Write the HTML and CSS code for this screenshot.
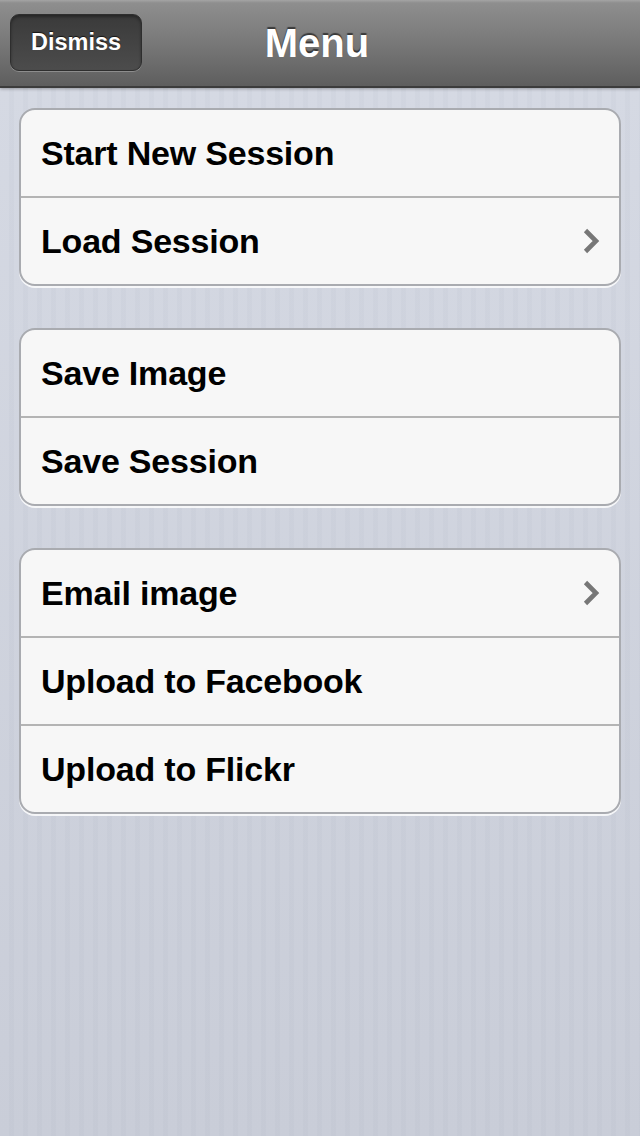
FILE: index.html
```html
<!DOCTYPE html>
<html>
<head>
<meta charset="utf-8">
<link rel="stylesheet" href="styles.css">
</head>
<body>
<div class="screen">
  <header class="navbar">
    <button class="dismiss">Dismiss</button>
    <h1 class="title">Menu</h1>
  </header>
  <main class="content">
    <ul class="group">
      <li class="cell">Start New Session</li>
      <li class="cell">Load Session<svg class="chev" viewBox="0 0 17 26"><path d="M2.5 2.5 L13 13 L2.5 23.5" fill="none" stroke="#777" stroke-width="4.6"/></svg></li>
    </ul>
    <ul class="group">
      <li class="cell">Save Image</li>
      <li class="cell">Save Session</li>
    </ul>
    <ul class="group">
      <li class="cell">Email image<svg class="chev" viewBox="0 0 17 26"><path d="M2.5 2.5 L13 13 L2.5 23.5" fill="none" stroke="#777" stroke-width="4.6"/></svg></li>
      <li class="cell">Upload to Facebook</li>
      <li class="cell">Upload to Flickr</li>
    </ul>
  </main>
</div>
</body>
</html>
```
FILE: styles.css
```css
html, body {
  margin: 0;
  padding: 0;
}
body {
  font-family: "Liberation Sans", Arial, Helvetica, sans-serif;
  width: 640px;
  height: 1136px;
  overflow: hidden;
}
.screen {
  width: 640px;
  height: 1136px;
  display: flex;
  flex-direction: column;
  background:
    repeating-linear-gradient(90deg, rgba(255,255,255,0.0) 0 9px, rgba(120,130,150,0.045) 9px 14px),
    linear-gradient(#d6dae4, #c9cdd8);
}
.navbar {
  height: 86px;
  flex: none;
  display: flex;
  align-items: center;
  justify-content: center;
  position: relative;
  background: linear-gradient(#a4a4a4 0, #8e8e8e 3px, #7a7a7a 40px, #5e5e5e 86px);
  border-bottom: 2px solid #3c3c3c;
  box-shadow: 0 1px 3px rgba(0,0,0,0.3);
}
.dismiss {
  position: absolute;
  left: 10px;
  top: 14px;
  width: 132px;
  height: 57px;
  box-sizing: border-box;
  border-radius: 9px;
  border: 1px solid #2e2e2e;
  background: linear-gradient(#3a3a3a, #4c4c4c);
  box-shadow: inset 0 2px 3px rgba(0,0,0,0.35), 0 1px 0 rgba(255,255,255,0.25);
  color: #fff;
  font-family: "Liberation Sans", Arial, sans-serif;
  font-weight: bold;
  font-size: 23.5px;
  text-shadow: 0 -1px 1px rgba(0,0,0,0.7);
  padding: 0;
}
.title {
  margin: 0 0 0 -6px;
  font-size: 40px;
  font-weight: bold;
  color: #fff;
  text-shadow: 0 -2px 1px rgba(0,0,0,0.55);
}
.content {
  padding: 20px 19px 0 19px;
  display: flex;
  flex-direction: column;
  gap: 42px;
}
.group {
  list-style: none;
  margin: 0;
  padding: 0;
  background: #f7f7f7;
  border: 2px solid #a9abb0;
  border-radius: 16px;
  box-shadow: 0 2px 0 rgba(255,255,255,0.8);
  overflow: hidden;
}
.cell {
  height: 86px;
  display: flex;
  align-items: center;
  justify-content: space-between;
  padding: 0 20px 0 20px;
  font-size: 34px;
  font-weight: bold;
  letter-spacing: -0.2px;
  color: #000;
  border-top: 2px solid #b4b4b4;
}
.cell:first-child {
  border-top: none;
}
.chev {
  width: 17px;
  height: 26px;
  margin-right: -1px;
}
```
